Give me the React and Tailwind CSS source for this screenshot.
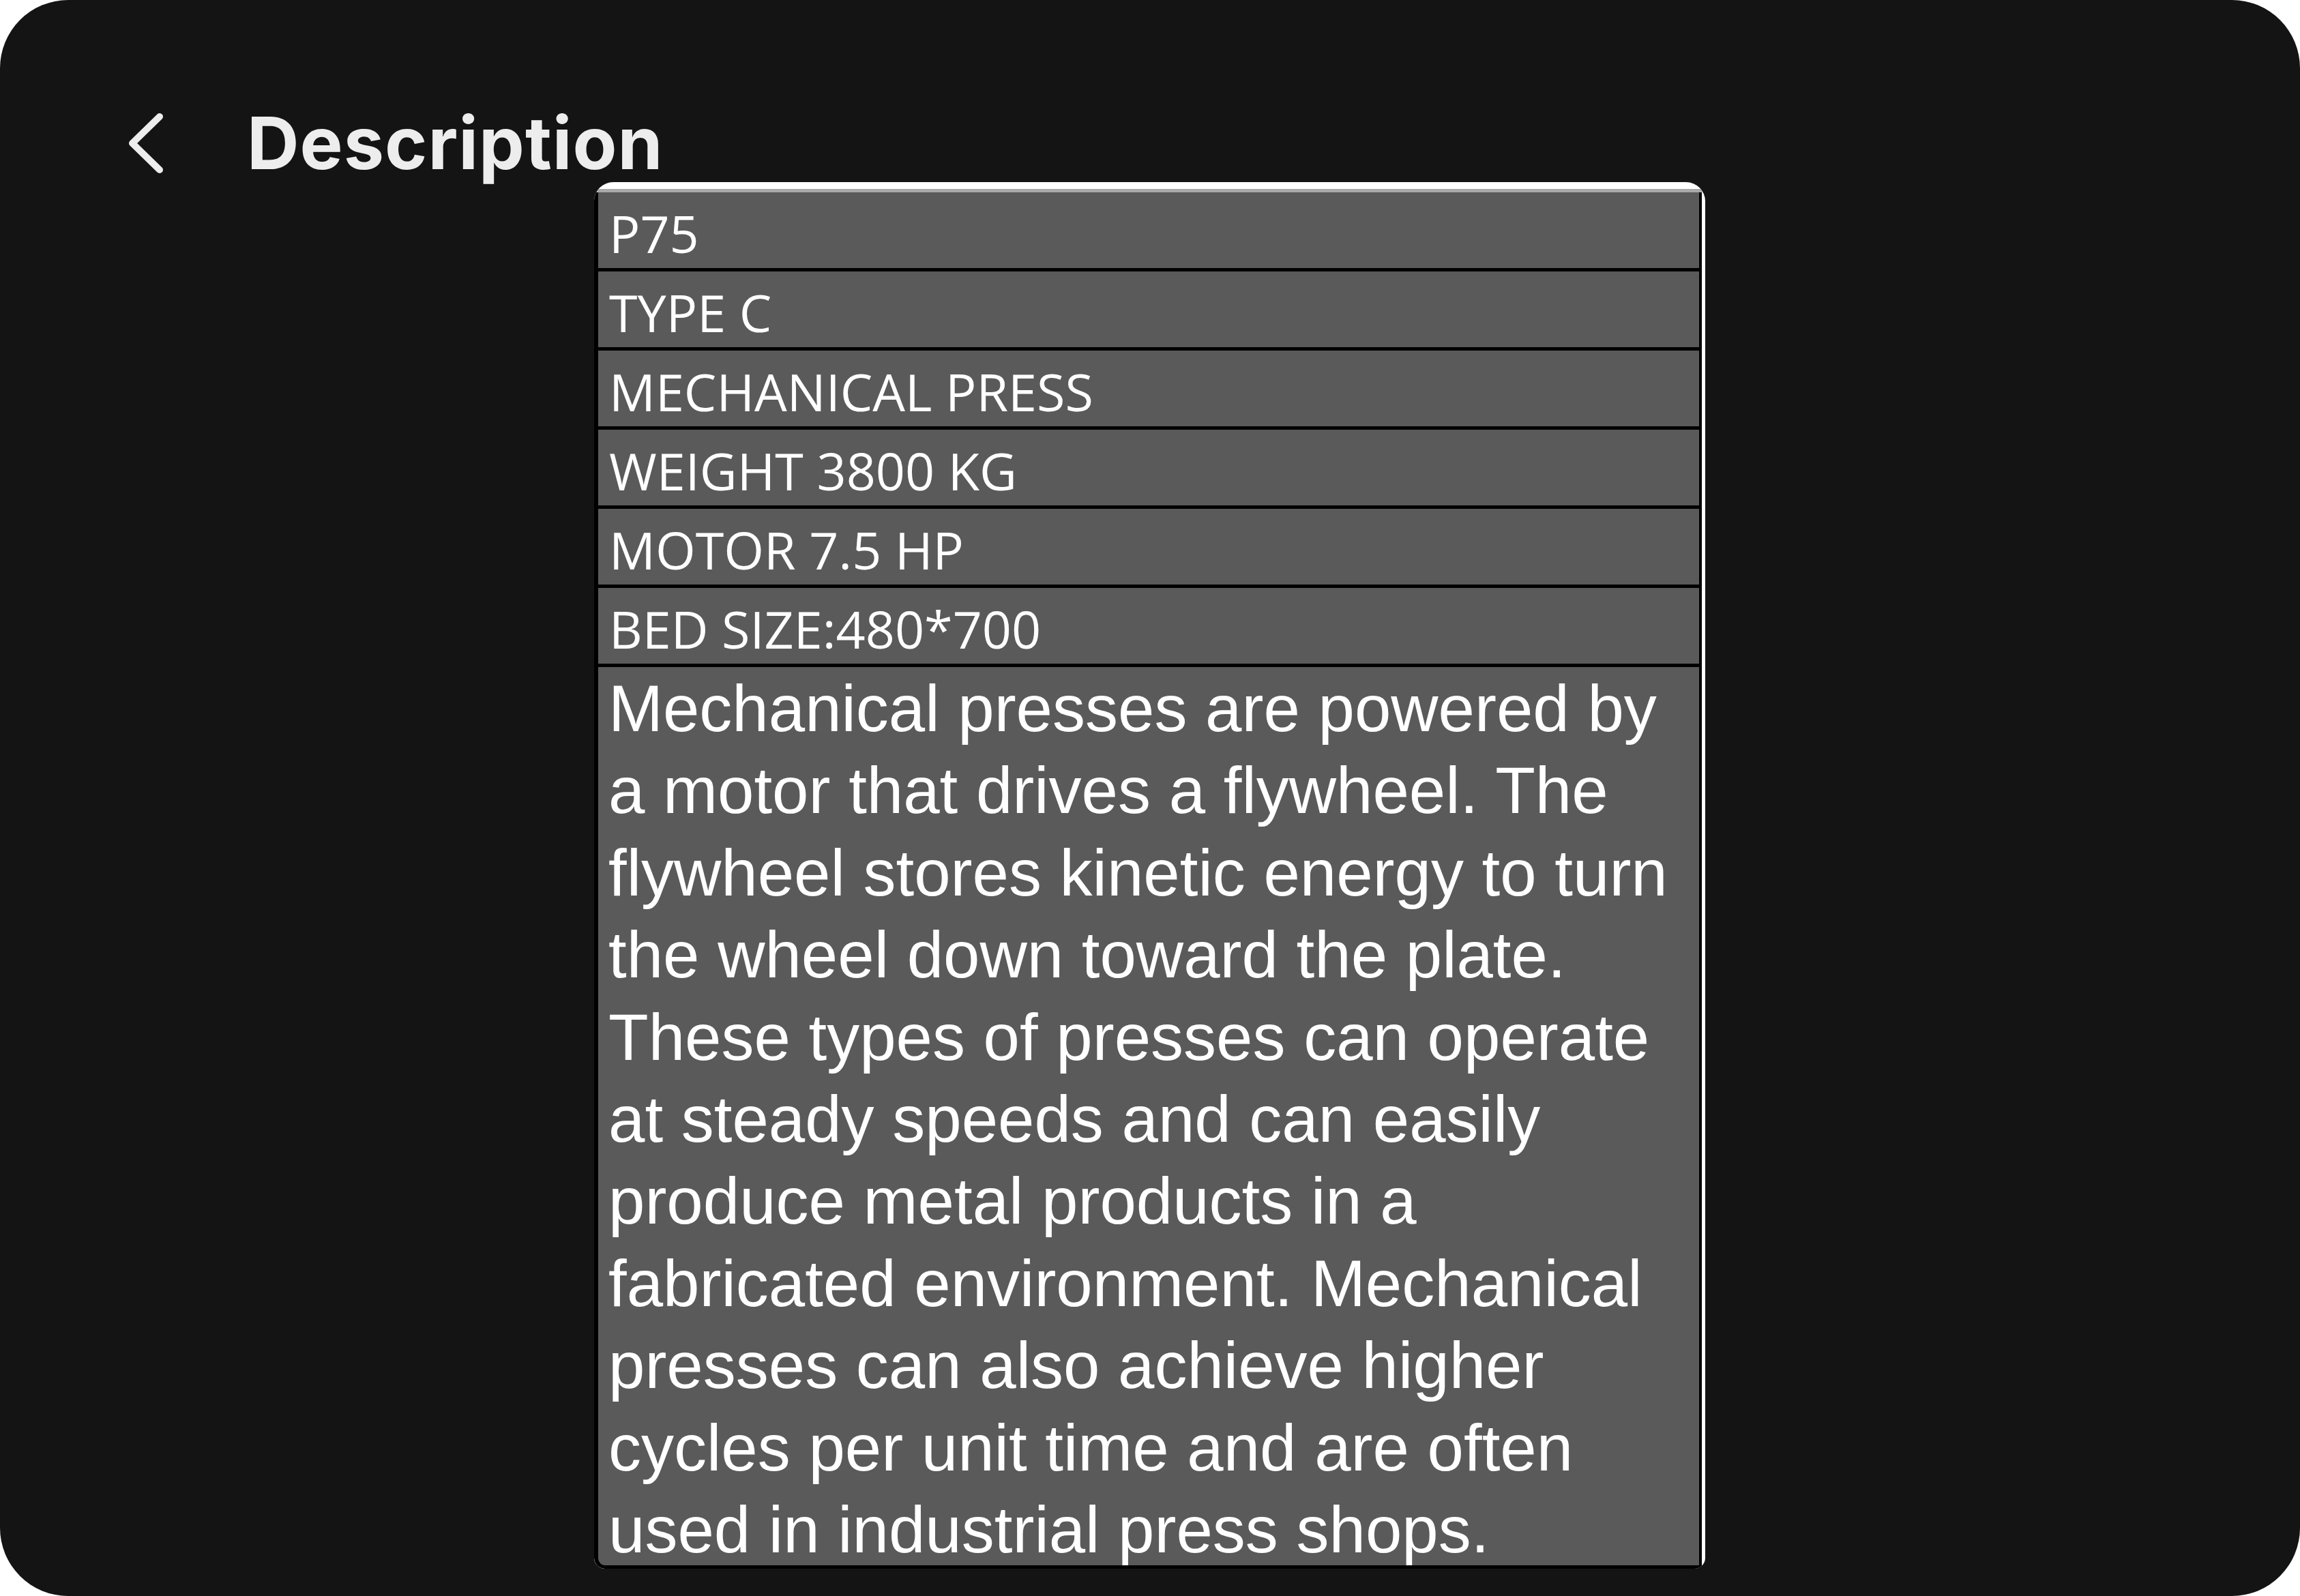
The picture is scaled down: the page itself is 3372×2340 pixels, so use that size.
import React from "react";

const specs = [
  "P75",
  "TYPE C",
  "MECHANICAL PRESS",
  "WEIGHT 3800 KG",
  "MOTOR 7.5 HP",
  "BED SIZE:480*700",
];

const description =
  "Mechanical presses are powered by a motor that drives a flywheel. The flywheel stores kinetic energy to turn the wheel down toward the plate. These types of presses can operate at steady speeds and can easily produce metal products in a fabricated environment. Mechanical presses can also achieve higher cycles per unit time and are often used in industrial press shops.";

function BackIcon() {
  return (
    <svg width="60" height="90" viewBox="0 0 60 90" fill="none">
      <polyline
        points="50,6 10,45 50,84"
        stroke="#ededed"
        strokeWidth="10"
        strokeLinecap="round"
        strokeLinejoin="round"
      />
    </svg>
  );
}

function SpecRow({ label }) {
  return (
    <div className="h-[116px] shrink-0 overflow-hidden border-b-[5px] border-black pl-[16px] font-['Open_Sans',sans-serif] text-[75.5px] leading-[119px] text-white">
      {label}
    </div>
  );
}

export default function App() {
  return (
    <div className="w-[3372px] h-[2340px] bg-white">
      <div className="flex h-full w-full flex-col rounded-[100px] bg-[#141414] pt-[158px]">
        {/* header */}
        <div className="flex h-[104px] items-center">
          <div className="ml-[184px] flex w-[178px] items-center">
            <BackIcon />
          </div>
          <h1 className="font-['Inter',sans-serif] text-[106px] font-bold leading-none tracking-[1px] text-[#ededed]">
            Description
          </h1>
        </div>

        {/* spec sheet */}
        <div className="ml-[871px] mt-[5px] flex h-[2033px] w-[1629px] flex-col overflow-hidden rounded-t-[28px] rounded-b-[16px] bg-white pt-[10px] pr-[5px]">
          <div className="ml-[5px] h-[5px] shrink-0 bg-[#a9a9a9]" />
          <div className="flex min-h-0 flex-1 flex-col overflow-hidden rounded-bl-[16px] border-b-[5px] border-l-[6px] border-r-[4px] border-black bg-[#5a5a5a]">
            {specs.map((s) => (
              <SpecRow key={s} label={s} />
            ))}
            <p className="pl-[15px] pr-[14px] pt-[1px] font-['Liberation_Sans',Arial,sans-serif] text-[96px] leading-[120.4px] text-white">
              {description}
            </p>
          </div>
        </div>
      </div>
    </div>
  );
}
